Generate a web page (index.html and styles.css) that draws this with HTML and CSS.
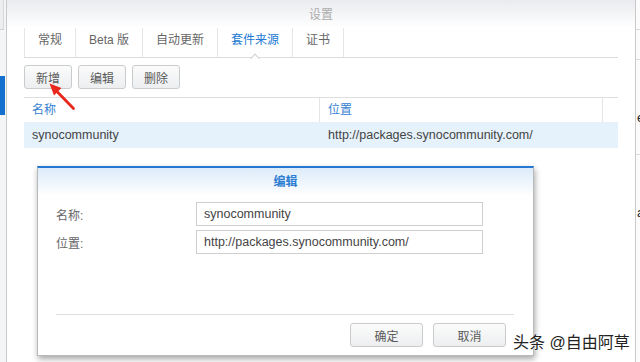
FILE: index.html
```html
<!DOCTYPE html>
<html lang="zh">
<head>
    <meta charset="UTF-8">
    <meta name="viewport" content="width=device-width, initial-scale=1.0">
    <title>设置</title>
    <link rel="stylesheet" href="styles.css">
</head>
<body>
    <div class="desk">
        <div class="side side-left">
            <div class="side-top"></div>
            <div class="side-mark"></div>
        </div>

        <div class="win">
            <div class="win-title">设置</div>
            <div class="win-body">
                <div class="tabs">
                    <div class="tab">常规</div>
                    <div class="tab">Beta 版</div>
                    <div class="tab">自动更新</div>
                    <div class="tab active">套件来源</div>
                    <div class="tab">证书</div>
                </div>

                <div class="toolbar">
                    <button class="btn">新增</button>
                    <button class="btn">编辑</button>
                    <button class="btn">删除</button>
                </div>

                <div class="grid">
                    <div class="grid-head">
                        <div class="col col-name">名称</div>
                        <div class="col col-url">位置</div>
                        <div class="col col-pad"></div>
                    </div>
                    <div class="grid-row selected">
                        <div class="col col-name">synocommunity</div>
                        <div class="col col-url">http://packages.synocommunity.com/</div>
                        <div class="col col-pad"></div>
                    </div>
                </div>
            </div>
        </div>

        <div class="side side-right">
            <div class="strip-line"></div>
            <div class="strip-line"></div>
            <div class="strip-text">e</div>
            <div class="strip-line"></div>
            <div class="strip-text">a</div>
        </div>
    </div>

    <svg class="arrow" width="40" height="36" viewBox="0 0 40 36">
        <line x1="33.5" y1="30.5" x2="16" y2="12.5" stroke="#e8281c" stroke-width="2.8" stroke-linecap="round"/>
        <polygon points="9.5,5.5 21.5,10 14,17.5" fill="#e8281c"/>
    </svg>

    <div class="dialog">
        <div class="dialog-head">编辑</div>
        <div class="dialog-form">
            <div class="field">
                <label class="field-label">名称:</label>
                <div class="field-input">synocommunity</div>
            </div>
            <div class="field">
                <label class="field-label">位置:</label>
                <div class="field-input">http://packages.synocommunity.com/</div>
            </div>
        </div>
        <div class="dialog-foot">
            <button class="btn btn-wide">确定</button>
            <button class="btn btn-wide">取消</button>
        </div>
    </div>

    <div class="watermark">头条 @自由阿草</div>
</body>
</html>
```

FILE: styles.css
```css
* {
    margin: 0;
    padding: 0;
    box-sizing: border-box;
    font-family: 'Liberation Sans', 'Noto Sans CJK SC', sans-serif;
}

body {
    width: 640px;
    height: 362px;
    overflow: hidden;
    background: #f2f3f4;
    position: relative;
}

.desk {
    display: flex;
    height: 362px;
}

.side {
    flex-shrink: 0;
    background: #f4f5f6;
}

.side-left {
    width: 6px;
    display: flex;
    flex-direction: column;
}

.side-top {
    height: 30px;
    border-right: 1px solid #d8d8d8;
    border-bottom: 1px solid #d0d0d0;
    background: #eceef0;
    margin-right: 2px;
}

.side-mark {
    margin-top: 46px;
    height: 39px;
    width: 5px;
    background: #1470cf;
}

.side-right {
    width: 4px;
    background: #fbfbfb;
    overflow: hidden;
}

.strip-line {
    height: 1px;
    background: #dcdcdc;
    margin-top: 29px;
}

.strip-text {
    margin-top: 50px;
    font-size: 13px;
    color: #222;
    margin-left: 1px;
}

.win {
    width: 630px;
    flex-shrink: 0;
    background: #fff;
    border-left: 1px solid #c9c9c9;
    border-right: 1px solid #c9c9c9;
    display: flex;
    flex-direction: column;
}

.win-title {
    height: 28px;
    line-height: 30px;
    text-align: center;
    font-size: 12px;
    color: #ababab;
    background: linear-gradient(#e9ebee, #ffffff);
}

.win-body {
    padding: 0 17px 0 17px;
}

.tabs {
    display: flex;
    height: 30px;
    border-bottom: 1px solid #dcdcdc;
}

.tab {
    position: relative;
    height: 29px;
    line-height: 24px;
    padding: 0 13px 5px;
    font-size: 12px;
    color: #666;
    border-left: 1px solid #e6e6e6;
}

.tab:last-child {
    border-right: 1px solid #e6e6e6;
}

.tab.active {
    color: #2179d3;
}

.tab.active::after {
    content: "";
    position: absolute;
    left: 50%;
    bottom: -5px;
    width: 6px;
    height: 6px;
    background: #fff;
    border-top: 1px solid #d0d0d0;
    border-left: 1px solid #d0d0d0;
    transform: translateX(-50%) rotate(45deg);
}

.toolbar {
    display: flex;
    gap: 6px;
    margin-top: 7px;
}

.btn {
    height: 24px;
    width: 48px;
    font-size: 12px;
    color: #5a5a5a;
    background: linear-gradient(#fbfbfb, #eceef0);
    border: 1px solid #c9cbcd;
    border-radius: 3px;
}

.btn-wide {
    width: 73px;
}

.grid {
    margin-top: 8px;
    border-top: 1px solid #dedede;
}

.grid-head,
.grid-row {
    display: flex;
}

.grid-head {
    height: 24px;
    line-height: 24px;
    font-size: 12px;
    color: #3582d2;
}

.grid-row {
    height: 26px;
    line-height: 26px;
    font-size: 12.5px;
    color: #444;
}

.grid-row.selected {
    background: #e5f1fb;
}

.col {
    padding-left: 8px;
    white-space: nowrap;
}

.col-name {
    width: 296px;
}

.col-url {
    width: 283px;
}

.col-pad {
    flex: 1;
}

.grid-head .col-name,
.grid-head .col-url {
    border-right: 1px solid #e4e4e4;
}

.arrow {
    position: absolute;
    left: 40px;
    top: 78px;
}

.dialog {
    position: absolute;
    left: 37px;
    top: 166px;
    width: 497px;
    height: 190px;
    background: #fff;
    border: 1px solid #b9b9b9;
    border-top: 2px solid #2577d4;
    box-shadow: 1px 3px 6px rgba(0, 0, 0, 0.35);
    display: flex;
    flex-direction: column;
}

.dialog-head {
    height: 28px;
    line-height: 28px;
    text-align: center;
    font-size: 12px;
    font-weight: 700;
    color: #2a7dd2;
    background: linear-gradient(#dcebf9, #ffffff);
}

.dialog-form {
    display: flex;
    flex-direction: column;
    gap: 4px;
    padding: 6px 0 0 18px;
}

.field {
    display: flex;
    align-items: center;
}

.field-label {
    width: 140px;
    font-size: 12px;
    color: #666;
}

.field-input {
    width: 287px;
    height: 24px;
    line-height: 22px;
    padding-left: 7px;
    font-size: 12.5px;
    color: #444;
    border: 1px solid #cfcfcf;
}

.dialog-foot {
    margin: auto 19px 0 18px;
    padding: 8px 8px 8px 0;
    border-top: 1px solid #dddddd;
    display: flex;
    justify-content: flex-end;
    gap: 10px;
}

.watermark {
    position: absolute;
    left: 513px;
    top: 333px;
    line-height: 20px;
    font-size: 16px;
    color: #222;
    text-shadow: 0 0 2px #fff, 0 0 2px #fff;
    white-space: nowrap;
}
```
